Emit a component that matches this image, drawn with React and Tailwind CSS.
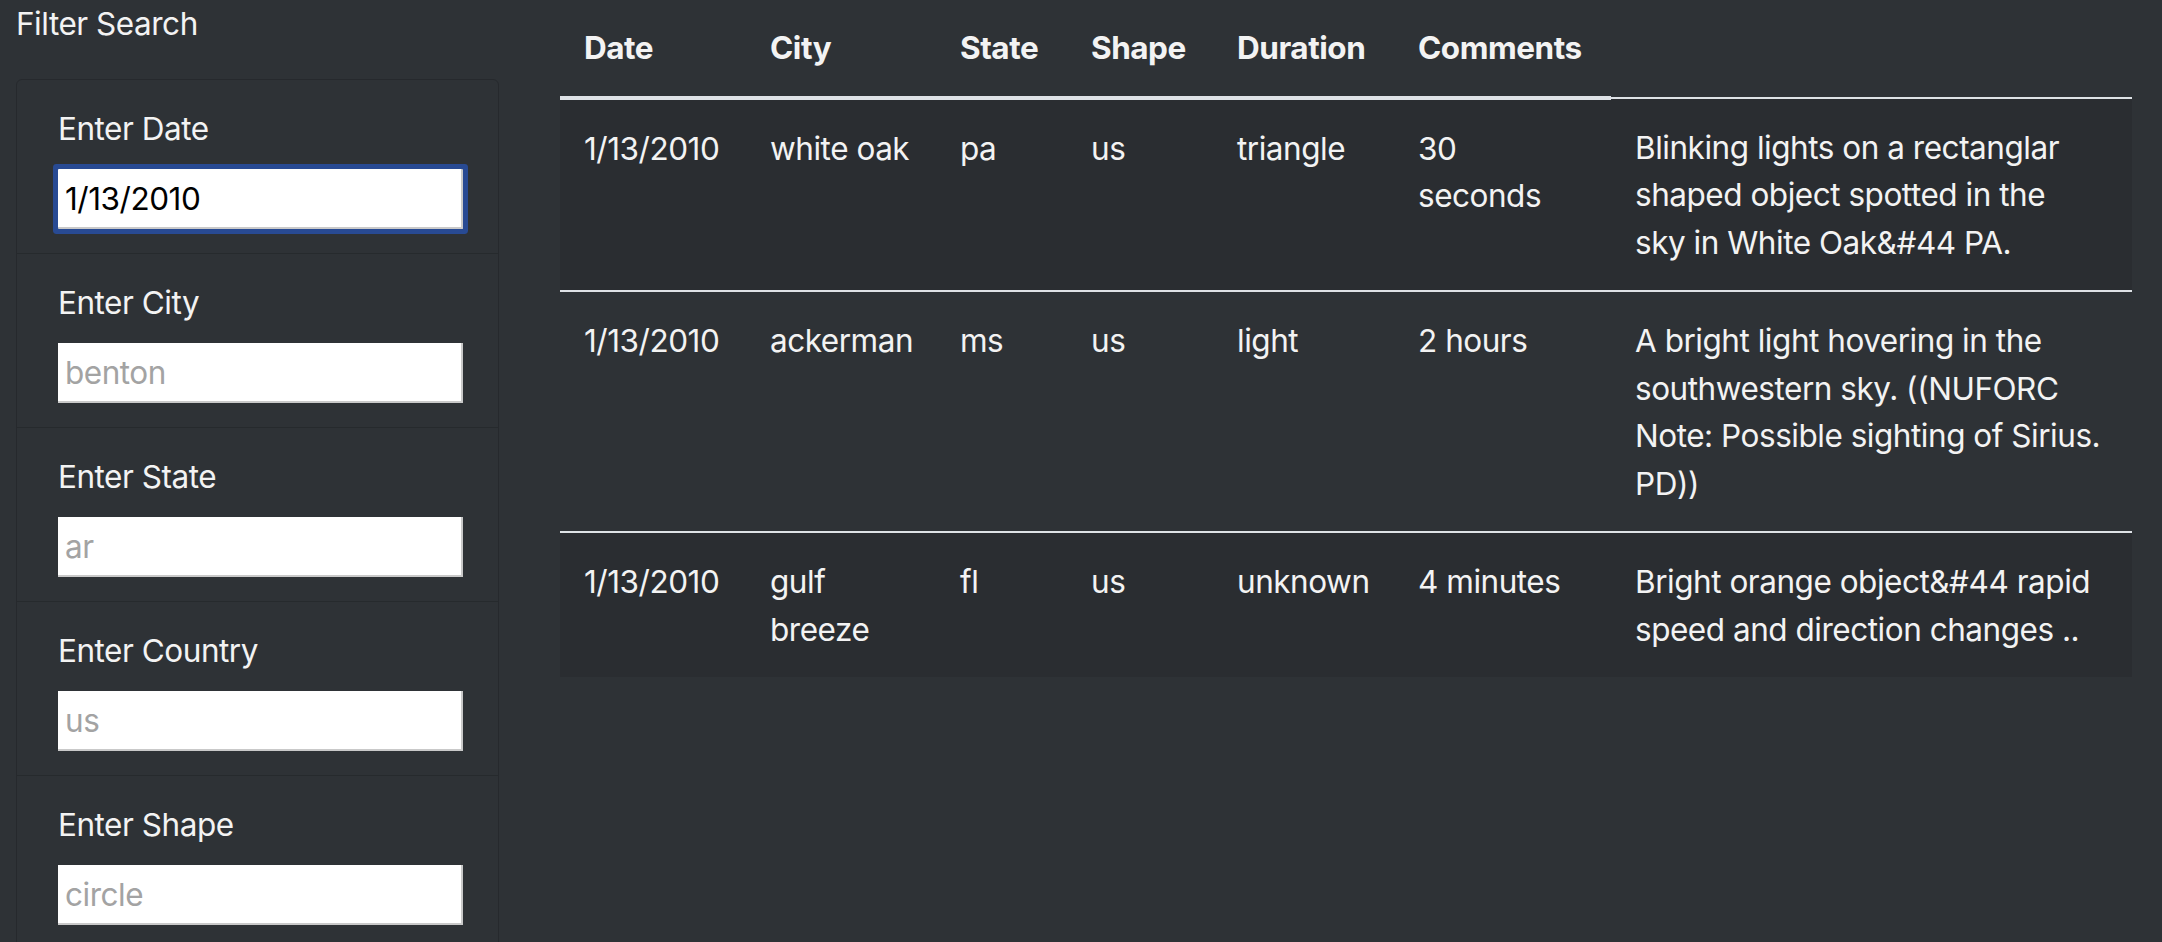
import React from 'react';

const filters = [
  { label: 'Enter Date', value: '1/13/2010', focused: true },
  { label: 'Enter City', placeholder: 'benton' },
  { label: 'Enter State', placeholder: 'ar' },
  { label: 'Enter Country', placeholder: 'us' },
  { label: 'Enter Shape', placeholder: 'circle' },
];

const headers = ['Date', 'City', 'State', 'Shape', 'Duration', 'Comments'];

// comments keep the reference's line breaks
const rows = [
  ['1/13/2010', 'white oak', 'pa', 'us', 'triangle', '30 seconds', ['Blinking lights on a rectanglar', 'shaped object spotted in the', 'sky in White Oak&#44 PA.']],
  ['1/13/2010', 'ackerman', 'ms', 'us', 'light', '2 hours', ['A bright light hovering in the', 'southwestern sky. ((NUFORC', 'Note: Possible sighting of Sirius.', 'PD))']],
  ['1/13/2010', 'gulf breeze', 'fl', 'us', 'unknown', '4 minutes', ['Bright orange object&#44 rapid', 'speed and direction changes ..']],
];

function FilterItem({ label, value, placeholder, focused }) {
  return (
    <li className="border-b border-[#262a2d] pl-[41px] pr-[35px] pt-[25px] pb-[24px]">
      <label className="block h-[47px] mb-[17px]">{label}</label>
      <input
        type="text"
        defaultValue={value}
        placeholder={placeholder}
        className={
          'block w-[405px] h-[60px] bg-white text-black pl-[7px] border-b-2 border-r-2 border-[#c9c9c9] outline-none tracking-[-0.015em] placeholder:text-[#a3a3a3] ' +
          (focused ? 'rounded-[1px] shadow-[0_0_0_5px_#284a93]' : '')
        }
      />
    </li>
  );
}

export default function App() {
  return (
    <div className="min-h-screen bg-[#2e3236] text-[#f3f3f3] font-[Inter,sans-serif] text-[31.5px] leading-[47px] tracking-[-0.015em]">
      <div className="flex">
        <div className="ml-[16px] w-[483px] shrink-0">
          <h3 className="h-[79px] font-normal">Filter Search</h3>
          <ul className="border border-[#26292d] rounded-[6px]">
            {filters.map((f) => (
              <FilterItem key={f.label} {...f} />
            ))}
          </ul>
        </div>

        <div className="ml-[61px] w-[1572px] shrink-0">
          <table className="w-full table-fixed border-collapse text-left leading-[47.5px]">
            <colgroup>
              <col className="w-[186px]" />
              <col className="w-[190px]" />
              <col className="w-[131px]" />
              <col className="w-[146px]" />
              <col className="w-[181px]" />
              <col className="w-[217px]" />
              <col className="w-[521px]" />
            </colgroup>
            <thead>
              <tr>
                {headers.map((h) => (
                  <th key={h} className="px-[24px] pt-[24px] pb-[24px] font-bold align-top border-b-4 border-[#dee2e6]">
                    {h}
                  </th>
                ))}
              </tr>
            </thead>
            <tbody>
              {rows.map((r, i) => (
                <tr key={i} className={'border-t-2 border-[#dee2e6] ' + (i % 2 === 0 ? 'bg-[#2a2d31]' : '')}>
                  {r.slice(0, 6).map((c, j) => (
                    <td key={j} className="px-[24px] pt-[25px] pb-[24px] align-top">
                      {c}
                    </td>
                  ))}
                  <td className="px-[24px] pt-[25px] pb-[24px] align-top whitespace-nowrap">
                    {r[6].map((line, k) => (
                      <span key={k} className="block">{line}</span>
                    ))}
                  </td>
                </tr>
              ))}
            </tbody>
          </table>
        </div>
      </div>
    </div>
  );
}
